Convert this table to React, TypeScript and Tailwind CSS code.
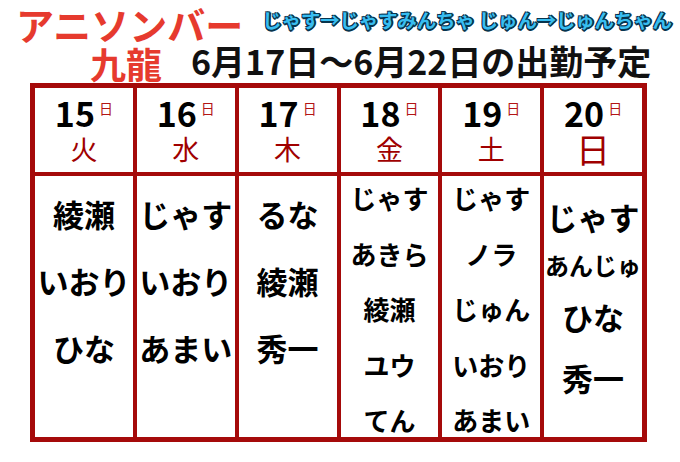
const days = [
  { d: "15", w: "火" },
  { d: "16", w: "水" },
  { d: "17", w: "木" },
  { d: "18", w: "金" },
  { d: "19", w: "土" },
  { d: "20", w: "日", big: true },
];

const threeRow = [
  ["綾瀬", "いおり", "ひな"],
  ["じゃす", "いおり", "あまい"],
  ["るな", "綾瀬", "秀一"],
];

const fiveRow = [
  ["じゃす", "あきら", "綾瀬", "ユウ", "てん"],
  ["じゃす", "ノラ", "じゅん", "いおり", "あまい"],
];

export default function App() {
  return (
    <div className="relative w-[680px] h-[462px] overflow-hidden bg-white text-black font-['Noto_Sans_CJK_JP','Noto_Sans',sans-serif]">
      {/* title */}
      <div className="flex items-center pl-[16px] pt-[5px] h-[43px]">
        <span className="text-[38px] leading-[38px] font-bold text-[#e63a2e] whitespace-nowrap">アニソンバー</span>
        <span className="ml-[19px] mt-[-8px] text-[19.5px] leading-[24px] font-bold text-[#38bdf0] whitespace-nowrap tracking-[-0.2px] [text-shadow:-1px_-1px_0_#07344d,1px_-1px_0_#07344d,-1px_1px_0_#07344d,1px_1px_0_#07344d,0_2px_0_#07344d,2px_0_0_#07344d]">
          じゃす→じゃすみんちゃ じゅん→じゅんちゃん
        </span>
      </div>
      <div className="flex items-center pl-[90px] h-[40px]">
        <span className="text-[36px] leading-[36px] font-bold text-[#e63a2e] whitespace-nowrap">九龍</span>
        <span className="ml-[29px] mt-[-4px] text-[34px] leading-[36px] font-bold text-[#111] whitespace-nowrap">
          6月17日〜6月22日の出勤予定
        </span>
      </div>

      {/* schedule table */}
      <div className="ml-[30px] w-[617px] h-[359px] grid grid-cols-6 grid-rows-[84px_261px] gap-[4px] bg-[#a50a0a] border-[5px] border-[#a50a0a]">
        {days.map((day) => (
          <div key={day.d} className="bg-white flex flex-col items-center pt-[5px]">
            <div className="flex items-start">
              <span className="text-[34px] leading-[40px] font-bold">{day.d}</span>
              <span className="ml-[4px] mt-[7px] text-[14px] leading-[16px] text-[#b31515]">日</span>
            </div>
            <span
              className={
                day.big
                  ? "text-[34px] leading-[32px] text-[#a00000]"
                  : "text-[27px] leading-[32px] text-[#a00000]"
              }
            >
              {day.w}
            </span>
          </div>
        ))}

        {threeRow.map((names, i) => (
          <div key={"t" + i} className="bg-white flex flex-col items-center pt-[22px] gap-[36px]">
            {names.map((n, j) => (
              <span key={j} className="text-[31px] leading-[31px] font-bold whitespace-nowrap">{n}</span>
            ))}
          </div>
        ))}

        {fiveRow.map((names, i) => (
          <div key={"f" + i} className="bg-white flex flex-col items-center pt-[9px] gap-[29.5px]">
            {names.map((n, j) => (
              <span key={j} className="text-[26px] leading-[26px] font-bold whitespace-nowrap">{n}</span>
            ))}
          </div>
        ))}

        <div className="bg-white flex flex-col items-center pt-[25px]">
          <span className="text-[31px] leading-[31px] font-bold whitespace-nowrap">じゃす</span>
          <span className="mt-[21px] text-[24px] leading-[24px] font-bold whitespace-nowrap">あんじゅ</span>
          <span className="mt-[24px] text-[31px] leading-[31px] font-bold whitespace-nowrap">ひな</span>
          <span className="mt-[30px] text-[31px] leading-[31px] font-bold whitespace-nowrap">秀一</span>
        </div>
      </div>
    </div>
  );
}
